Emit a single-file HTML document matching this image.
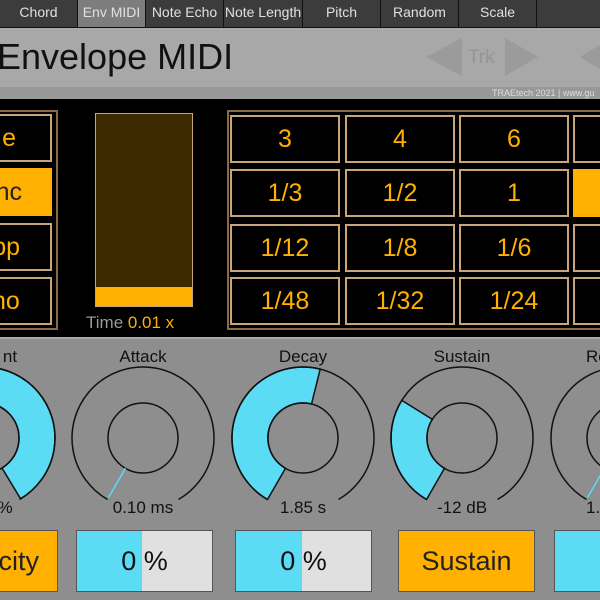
<!DOCTYPE html>
<html><head><style>
*{margin:0;padding:0;box-sizing:border-box}
body{width:600px;height:600px;overflow:hidden;background:#8e8e8e;font-family:"Liberation Sans","DejaVu Sans",sans-serif;position:relative}
.a{position:absolute}
.tab{position:absolute;top:0;height:27px;background:#3c3c3c;color:#e0e0e0;font-size:14px;line-height:24px;text-align:center}
.cell{position:absolute;border:2px solid #c9a57a;background:#000;color:#ffb000;font-size:25px;text-align:center}
.lbl{position:absolute;font-size:17px;color:#111;text-align:center;width:120px}
</style></head><body>
<div class="a" style="left:0;top:0;width:600px;height:28px;background:#111"></div>
<div class="tab" style="left:0;width:77px">Chord</div>
<div class="tab" style="left:78px;width:67px;background:#7d7d7d">Env MIDI</div>
<div class="tab" style="left:146px;width:77px">Note Echo</div>
<div class="tab" style="left:224px;width:78px">Note Length</div>
<div class="tab" style="left:303px;width:77px">Pitch</div>
<div class="tab" style="left:381px;width:77px">Random</div>
<div class="tab" style="left:459px;width:77px">Scale</div>
<div class="tab" style="left:537px;width:63px"></div>
<div class="a" style="left:0;top:28px;width:600px;height:59px;background:#a8a8a8"></div>
<div class="a" style="left:-3px;top:36px;font-size:36px;color:#111">Envelope MIDI</div>
<svg class="a" style="left:0;top:28px" width="600" height="60"><polygon points="426,29 462,10 462,48" fill="#9b9b9b"/><polygon points="505,10 538,29 505,48" fill="#9b9b9b"/><polygon points="580,29 600,17 600,41" fill="#9b9b9b"/><text x="468" y="35" font-size="19" fill="#959595" font-family="Liberation Sans">Trk</text></svg>
<div class="a" style="left:0;top:87px;width:600px;height:12px;background:#989898"></div>
<div class="a" style="left:492px;top:87px;font-size:9px;color:#ddd;line-height:12px;white-space:nowrap">TRAEtech 2021 | www.gu</div>
<div class="a" style="left:0;top:99px;width:600px;height:240px;background:#000"></div>
<div class="a" style="left:-4px;top:110px;width:62px;height:220px;border:2px solid #8a6a45"></div>
<div class="cell" style="left:-10px;top:114px;width:62px;height:48px;line-height:44px;text-align:right;padding-right:34px">e</div>
<div class="cell" style="left:-10px;top:168px;width:62px;height:48px;line-height:44px;background:#ffb000;color:#222;text-align:right;padding-right:28px;border-color:#ffb000">nc</div>
<div class="cell" style="left:-10px;top:223px;width:62px;height:48px;line-height:44px;text-align:right;padding-right:30px">pp</div>
<div class="cell" style="left:-10px;top:277px;width:62px;height:48px;line-height:44px;text-align:right;padding-right:32px">no</div>
<div class="a" style="left:95px;top:113px;width:98px;height:194px;border:1px solid #c9a57a;background:#3c2900"></div>
<div class="a" style="left:96px;top:287px;width:96px;height:19px;background:#ffb000"></div>
<div class="a" style="left:86px;top:313px;font-size:17px;color:#999">Time <span style="color:#ffb000">0.01 x</span></div>
<div class="a" style="left:227px;top:110px;width:380px;height:220px;border:2px solid #8a6a45"></div>
<div class="cell" style="left:230px;top:115px;width:110px;height:48px;line-height:44px">3</div>
<div class="cell" style="left:345px;top:115px;width:110px;height:48px;line-height:44px">4</div>
<div class="cell" style="left:459px;top:115px;width:110px;height:48px;line-height:44px">6</div>
<div class="cell" style="left:573px;top:115px;width:110px;height:48px"></div>
<div class="cell" style="left:230px;top:169px;width:110px;height:48px;line-height:44px">1/3</div>
<div class="cell" style="left:345px;top:169px;width:110px;height:48px;line-height:44px">1/2</div>
<div class="cell" style="left:459px;top:169px;width:110px;height:48px;line-height:44px">1</div>
<div class="cell" style="left:573px;top:169px;width:110px;height:48px;background:#ffb000;border-color:#ffb000"></div>
<div class="cell" style="left:230px;top:224px;width:110px;height:48px;line-height:44px">1/12</div>
<div class="cell" style="left:345px;top:224px;width:110px;height:48px;line-height:44px">1/8</div>
<div class="cell" style="left:459px;top:224px;width:110px;height:48px;line-height:44px">1/6</div>
<div class="cell" style="left:573px;top:224px;width:110px;height:48px"></div>
<div class="cell" style="left:230px;top:277px;width:110px;height:48px;line-height:44px">1/48</div>
<div class="cell" style="left:345px;top:277px;width:110px;height:48px;line-height:44px">1/32</div>
<div class="cell" style="left:459px;top:277px;width:110px;height:48px;line-height:44px">1/24</div>
<div class="cell" style="left:573px;top:277px;width:110px;height:48px"></div>
<div class="a" style="left:0;top:337px;width:600px;height:2px;background:#aaa"></div>
<svg class="a" style="left:0;top:0" width="600" height="600">
<g fill="#5cdcf4" stroke="#111" stroke-width="1.5">
<path d="M-51.5,499.5 A71,71 0 1 1 20.6,498.8 L2,468 A35,35 0 1 0 -33.5,468.3 Z"/>
<path d="M267.5,499.5 A71,71 0 0 1 320.2,369.1 L311.5,404 A35,35 0 0 0 285.5,468.3 Z"/>
<path d="M426.5,499.5 A71,71 0 0 1 401.8,400.4 L432.3,419.4 A35,35 0 0 0 444.5,468.3 Z"/>
</g>
<g fill="none" stroke="#111" stroke-width="1.5">
<path d="M-51.5,499.5 A71,71 0 1 1 19.5,499.5"/><circle cx="-16" cy="438" r="35"/>
<path d="M107.5,499.5 A71,71 0 1 1 178.5,499.5"/><circle cx="143" cy="438" r="35"/>
<path d="M267.5,499.5 A71,71 0 1 1 338.5,499.5"/><circle cx="303" cy="438" r="35"/>
<path d="M426.5,499.5 A71,71 0 1 1 497.5,499.5"/><circle cx="462" cy="438" r="35"/>
<path d="M586.5,499.5 A71,71 0 1 1 657.5,499.5"/><circle cx="622" cy="438" r="35"/>
</g>
<line x1="125.5" y1="468.3" x2="108.5" y2="497.5" stroke="#5cdcf4" stroke-width="1.5"/>
<line x1="604.5" y1="468.3" x2="587.5" y2="497.5" stroke="#5cdcf4" stroke-width="1.5"/>
</svg>
<div class="lbl" style="left:-50px;top:347px">nt</div>
<div class="lbl" style="left:83px;top:347px">Attack</div>
<div class="lbl" style="left:243px;top:347px">Decay</div>
<div class="lbl" style="left:402px;top:347px">Sustain</div>
<div class="lbl" style="left:544px;top:347px;text-align:left;padding-left:42px">Re</div>
<div class="lbl" style="left:-55px;top:498px">%</div>
<div class="lbl" style="left:83px;top:498px">0.10 ms</div>
<div class="lbl" style="left:243px;top:498px">1.85 s</div>
<div class="lbl" style="left:402px;top:498px">-12 dB</div>
<div class="lbl" style="left:586px;top:498px;text-align:left">1.</div>
<div class="a" style="left:-10px;top:530px;width:68px;height:62px;background:#ffb000;border:1px solid #555;font-size:27px;line-height:60px;color:#222;text-align:right;padding-right:18px">city</div>
<div class="a" style="left:76px;top:530px;width:137px;height:62px;background:linear-gradient(90deg,#5cdcf4 0 65px,#e0e0e0 65px);border:1px solid #555;font-size:27px;line-height:60px;color:#111;text-align:center">0 %</div>
<div class="a" style="left:235px;top:530px;width:137px;height:62px;background:linear-gradient(90deg,#5cdcf4 0 66px,#e0e0e0 66px);border:1px solid #555;font-size:27px;line-height:60px;color:#111;text-align:center">0 %</div>
<div class="a" style="left:398px;top:530px;width:137px;height:62px;background:#ffb000;border:1px solid #555;font-size:27px;line-height:60px;color:#222;text-align:center">Sustain</div>
<div class="a" style="left:554px;top:530px;width:60px;height:62px;background:#5cdcf4;border:1px solid #555"></div>
</body></html>
